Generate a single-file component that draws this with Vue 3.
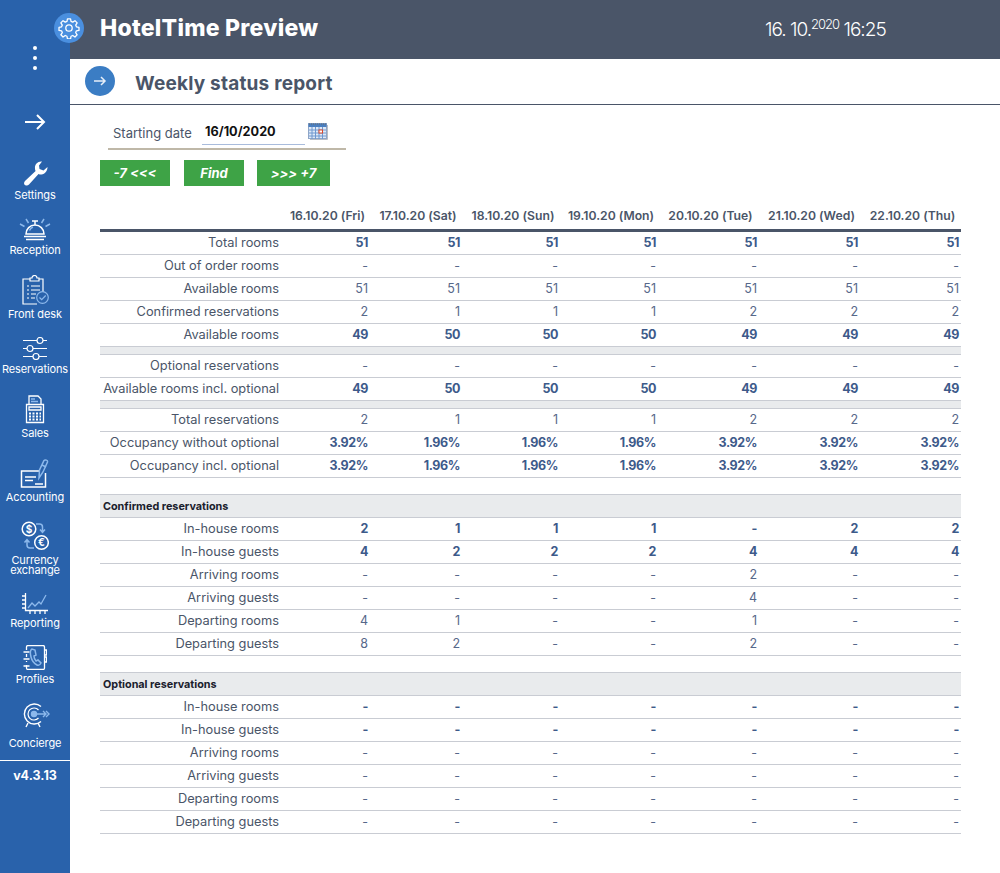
<script setup>
const dates = ['16.10.20 (Fri)','17.10.20 (Sat)','18.10.20 (Sun)','19.10.20 (Mon)','20.10.20 (Tue)','21.10.20 (Wed)','22.10.20 (Thu)']
const d = v => Array(7).fill(v)
const rows = [
  { l:'Total rooms', v:d('51'), b:1 },
  { l:'Out of order rooms', v:d('-') },
  { l:'Available rooms', v:d('51') },
  { l:'Confirmed reservations', v:['2','1','1','1','2','2','2'] },
  { l:'Available rooms', v:['49','50','50','50','49','49','49'], b:1 },
  { sep:1 },
  { l:'Optional reservations', v:d('-') },
  { l:'Available rooms incl. optional', v:['49','50','50','50','49','49','49'], b:1 },
  { sep:1 },
  { l:'Total reservations', v:['2','1','1','1','2','2','2'] },
  { l:'Occupancy without optional', v:['3.92%','1.96%','1.96%','1.96%','3.92%','3.92%','3.92%'], b:1 },
  { l:'Occupancy incl. optional', v:['3.92%','1.96%','1.96%','1.96%','3.92%','3.92%','3.92%'], b:1 },
  { gap:1 },
  { sec:'Confirmed reservations' },
  { l:'In-house rooms', v:['2','1','1','1','-','2','2'], b:1 },
  { l:'In-house guests', v:['4','2','2','2','4','4','4'], b:1 },
  { l:'Arriving rooms', v:['-','-','-','-','2','-','-'] },
  { l:'Arriving guests', v:['-','-','-','-','4','-','-'] },
  { l:'Departing rooms', v:['4','1','-','-','1','-','-'] },
  { l:'Departing guests', v:['8','2','-','-','2','-','-'] },
  { gap:1 },
  { sec:'Optional reservations' },
  { l:'In-house rooms', v:d('-'), b:1 },
  { l:'In-house guests', v:d('-'), b:1 },
  { l:'Arriving rooms', v:d('-') },
  { l:'Arriving guests', v:d('-') },
  { l:'Departing rooms', v:d('-') },
  { l:'Departing guests', v:d('-') },
]
const cols = [181, 89, 92, 98, 98, 101, 101, 101]
</script>

<template>
  <div class="page">
    <aside class="side">
      <div class="dots"><i></i><i></i><i></i></div>
      <svg class="arrow" width="22" height="18" viewBox="0 0 22 18" fill="none" stroke="#fff" stroke-width="2"><path d="M1 9h19M13 2l7 7-7 7"/></svg>

      <div class="item h38">
        <svg width="25" height="25" viewBox="0 0 25 25" fill="#fff"><path d="M19 .5C15 0 11.5 3 12 7.5c0 1 .3 2 .6 2.5L2 20c-1.500 1.500-1 3.500 0 4 1.500 1 3 .5 4-.5L15.500 13c1 .4 2 .6 3 .5 3.500-.5 6-3.500 6-7.500l-4 3.500-4-1.500-.5-3.500z"/></svg>
        <span>Settings</span>
      </div>
      <div class="item h55">
        <svg width="32" height="23" viewBox="0 0 32 23" fill="none" stroke="#fff" stroke-width="1.500"><path d="M7 16a9 9 0 0 1 18 0zM16 7V3.500M13 3h6M5 18.500h22M7 21.500h18"/><path stroke="#8db9ec" d="M10.500 12.500a6 6 0 0 1 3.500-3.500M1 6l4.500 2.500M31 6l-4.500 2.500M7 1l2.500 4M25 1l-2.500 4"/></svg>
        <span>Reception</span>
      </div>
      <div class="item h64">
        <svg width="28" height="30" viewBox="0 0 28 30" fill="none" stroke="#fff" stroke-width="1.200"><path d="M9 4H2v25h14M18 4h4v13M9 6V3h2a2.500 2.500 0 0 1 5 0h2v3zM6 11h2M10 11h9M6 15h2M10 15h9M6 19h2M10 19h5M6 23h2M10 23h4"/><circle cx="21.500" cy="22.500" r="5.800" stroke="#8db9ec"/><path stroke="#8db9ec" d="M18.500 22.500l2.200 2.200 4-4.200"/></svg>
        <span>Front desk</span>
      </div>
      <div class="item h55">
        <svg width="26" height="23" viewBox="0 0 26 23" fill="none" stroke="#fff" stroke-width="1.200"><path d="M1 3.500h14M21 3.500h4M1 11.500h4M11 11.500h14M1 19.500h10M17 19.500h8"/><circle cx="18" cy="3.500" r="3"/><circle cx="8" cy="11.500" r="3"/><circle cx="14" cy="19.500" r="3"/></svg>
        <span>Reservations</span>
      </div>
      <div class="item h64">
        <svg width="20" height="29" viewBox="0 0 20 29" fill="none" stroke="#fff" stroke-width="1.300"><path d="M4 9V1h9l3 3v5"/><path stroke="#8db9ec" d="M6 4h4M6 6.500h7"/><path d="M1.500 9.500h17v18h-17z"/><path d="M4 12h12v3H4z"/><path stroke-width="2" stroke-dasharray="2 1.500" d="M4 18.500h12M4 21.500h12M4 24.500h12"/></svg>
        <span>Sales</span>
      </div>
      <div class="item h64">
        <svg width="30" height="29" viewBox="0 0 30 29" fill="none" stroke="#fff" stroke-width="1.500"><path d="M20 12H1.500v16h24V14"/><path stroke-width="1.500" d="M5 18h11M5 21.500h8M15 25h8"/><path stroke="#8db9ec" d="M19 19l.5-8L24 1.500c1-1 4-.5 3.500 1.500L23 13z"/><path stroke="#8db9ec" d="M22 6l4 2"/></svg>
        <span>Accounting</span>
      </div>
      <div class="item h73">
        <svg width="28" height="30" viewBox="0 0 28 30" fill="none" stroke="#fff" stroke-width="1.500"><circle cx="8" cy="8" r="6.800"/><circle cx="20.500" cy="21.500" r="6.800"/><path stroke="#8db9ec" d="M15 3h3.500a3 3 0 0 1 3 3v5M19 8.500l2.500 2.800 2.500-2.800M13 27H9a3 3 0 0 1-3-3v-5M3.500 21.500L6 18.700l2.500 2.800"/><text x="8" y="11.500" text-anchor="middle" class="cur">$</text><text x="20.500" y="25" text-anchor="middle" class="cur">€</text></svg>
        <span>Currency<br>exchange</span>
      </div>
      <div class="item h53">
        <svg width="26" height="21" viewBox="0 0 26 21" fill="none" stroke="#fff" stroke-width="1.300"><path d="M3.500 0v17.500H26"/><path d="M0 3h3.500M0 7h3.500M0 11h3.500M0 15h3.500M8 17.500V21M13 17.500V21M18 17.500V21M23 17.500V21"/><path stroke="#8db9ec" d="M6 15l4-5 3 3 4-4 2 2 5-9"/></svg>
        <span>Reporting</span>
      </div>
      <div class="item h56">
        <svg width="24" height="25" viewBox="0 0 24 25" fill="none" stroke="#fff" stroke-width="1.300"><path d="M3.500 5V2a1.500 1.500 0 0 1 1.500-1.500h15A1.500 1.500 0 0 1 21.500 2v21a1.500 1.500 0 0 1-1.500 1.500H5A1.500 1.500 0 0 1 3.500 23v-3M3.500 9v3M3.500 16v1M.5 7h6M.5 14h6M.5 21h6M21.500 5h2v5h-2M21.500 12h2v5h-2"/><path stroke="#8db9ec" stroke-width="1.500" d="M9 4c-2 1-2 4-1 8s4 7 6 8 3 0 4-2l-3-3-2 1c-1-1-2-3-2-5l2-1-1-5z"/></svg>
        <span>Profiles</span>
      </div>
      <div class="item h64 conc">
        <svg width="29" height="26" viewBox="0 0 29 26" fill="none" stroke="#fff" stroke-width="1.400"><path d="M20 3.500a10 10 0 1 0 0 15"/><path stroke-width="1.200" d="M17.500 7a6 6 0 1 0 0 8"/><circle cx="13" cy="11" r="2.500" fill="#8db9ec" stroke="#8db9ec"/><path stroke="#8db9ec" d="M13 11h11M22 8l3 3-3 3M25 8l3 3-3 3"/><path d="M7 20l-2 4M17 20l2 4"/></svg>
        <span>Concierge</span>
      </div>
      <div class="version">v4.3.13</div>
    </aside>

    <div class="gear">
      <svg width="22" height="22" viewBox="0 0 24 24" fill="none" stroke="#fff" stroke-width="1.400"><circle cx="12" cy="12" r="3.500"/><path d="M10.300 2h3.400l.5 2.800 1.900.8 2.400-1.600 2.400 2.400-1.600 2.400.8 1.900 2.800.5v3.400l-2.800.5-.8 1.900 1.600 2.400-2.400 2.400-2.400-1.600-1.900.8-.5 2.800h-3.400l-.5-2.800-1.900-.8-2.400 1.600-2.400-2.400 1.600-2.400-.8-1.900-2.800-.5v-3.400l2.800-.5.8-1.900-1.600-2.400 2.400-2.400 2.400 1.600 1.900-.8z" stroke-linejoin="round"/></svg>
    </div>

    <div class="main">
      <header class="top">
        <h1>HotelTime Preview</h1>
        <div class="clock">16. 10.<sup>2020</sup> 16:25</div>
      </header>

      <div class="title">
        <div class="circle">
          <svg width="14" height="12" viewBox="0 0 14 12" fill="none" stroke="#e6eef8" stroke-width="1.500"><path d="M1 6h11M8 2l4 4-4 4"/></svg>
        </div>
        <h2>Weekly status report</h2>
      </div>

      <div class="content">
        <div class="filter">
          <label>Starting date</label>
          <div class="input">16/10/2020</div>
          <svg width="20" height="17" viewBox="0 0 20 17" class="cal">
            <rect x="0.500" y="0.500" width="18" height="15" fill="#dfe9f7" stroke="#8fa6c8"/>
            <rect x="0.500" y="0.500" width="18" height="3.500" fill="#4a7fc0"/>
            <path d="M1 1h18" stroke="#6b6b6b" stroke-dasharray="1 1"/>
            <path d="M1 7h17M1 10h17M1 13h17M4 4v12M7.500 4v12M11 4v12M14.500 4v12" stroke="#6f98cf" stroke-width="1"/>
            <rect x="11" y="7" width="3.500" height="3" fill="#fff" stroke="#d9482b"/>
            <path d="M19.500 2v14.500H2" stroke="#b9bdc4" fill="none"/>
          </svg>
        </div>
        <div class="buttons">
          <button class="b1">-7 &lt;&lt;&lt;</button>
          <button class="b2">Find</button>
          <button class="b3">&gt;&gt;&gt; +7</button>
        </div>

        <table class="report">
          <colgroup><col v-for="(w, i) in cols" :key="i" :width="w"></colgroup>
          <thead>
            <tr>
              <th></th>
              <th v-for="x in dates" :key="x">{{ x }}</th>
            </tr>
          </thead>
          <tbody>
            <template v-for="(r, i) in rows" :key="i">
              <tr v-if="r.sep" class="sep"><td colspan="8"></td></tr>
              <tr v-else-if="r.gap" class="gap"><td colspan="8"></td></tr>
              <tr v-else-if="r.sec" class="sec"><td colspan="8">{{ r.sec }}</td></tr>
              <tr v-else :class="{ bold: r.b }">
                <td class="lab">{{ r.l }}</td>
                <td v-for="(x, j) in r.v" :key="j" class="val">{{ x }}</td>
              </tr>
            </template>
          </tbody>
        </table>
      </div>
    </div>
  </div>
</template>

<style>
html, body { margin: 0; background: #fff; }
</style>

<style scoped>
.page {
  position: relative;
  display: flex;
  width: 1000px;
  height: 873px;
  overflow: hidden;
  font-family: Inter, "Open Sans", sans-serif;
  color: #4a5568;
}
.side {
  width: 70px;
  flex: none;
  background: #2962ab;
  color: #fff;
  display: flex;
  flex-direction: column;
  align-items: stretch;
  box-sizing: border-box;
  padding-top: 46px;
}
.dots { display: flex; flex-direction: column; align-items: center; gap: 6px; height: 67px; }
.dots i { width: 4px; height: 4px; border-radius: 50%; background: #fff; }
.arrow { align-self: center; height: 18px; flex: none; }
.item {
  display: flex;
  flex-direction: column;
  align-items: center;
  justify-content: flex-end;
  flex: none;
  gap: 4px;
}
.item svg { flex: none; display: block; }
.item span { font-size: 11px; line-height: 10px; text-align: center; white-space: nowrap; letter-spacing: -0.1px; }
.h38 { height: 69px; }
.h53 { height: 53px; }
.h55 { height: 55px; }
.h56 { height: 56px; }
.h64 { height: 64px; }
.h73 { height: 73px; }
.conc svg { margin-bottom: 5px; }
.cur { font-size: 10px; font-weight: 700; fill: #fff; stroke: none; font-family: Inter, sans-serif; }
.version {
  margin-top: 12px;
  border-top: 1px solid #fff;
  padding-top: 7px;
  text-align: center;
  font-size: 12.500px;
  font-weight: 700;
}
.gear {
  position: absolute;
  left: 54px;
  top: 13px;
  width: 30px;
  height: 30px;
  border-radius: 50%;
  background: #4a8fdf;
  display: flex;
  align-items: center;
  justify-content: center;
}
.main { flex: 1; min-width: 0; }
.top {
  height: 59px;
  background: #4a5568;
  color: #fff;
  display: flex;
  align-items: center;
  box-sizing: border-box;
  padding-left: 30px;
  padding-bottom: 3px;
}
.top h1 { margin: 0; font-size: 23px; font-weight: 800; letter-spacing: 0.25px; width: 665px; flex: none; white-space: nowrap; }
.clock { font-size: 19px; font-weight: 300; letter-spacing: -1px; margin-top: 3px; }
.clock sup { font-size: 13px; line-height: 0; }
.title {
  height: 46px;
  box-sizing: border-box;
  border-bottom: 1px solid #4a5568;
  display: flex;
  align-items: center;
  padding-left: 15px;
  gap: 20px;
}
.title h2 { margin: 3px 0 0; font-size: 19px; font-weight: 700; letter-spacing: 0.2px; }
.circle {
  width: 30px;
  height: 30px;
  border-radius: 50%;
  background: #3b7dc4;
  display: flex;
  align-items: center;
  justify-content: center;
  margin-bottom: 1px;
}
.content { padding: 0 39px 0 30px; }
.filter {
  margin-left: 8px;
  width: 238px;
  height: 45px;
  box-sizing: border-box;
  border-bottom: 2px solid #bfb8a8;
  display: flex;
  align-items: center;
  padding: 12px 0 0 5px;
}
.filter label { font-size: 13px; width: 89px; flex: none; }
.input {
  width: 103px;
  box-sizing: border-box;
  height: 25px;
  line-height: 24px;
  padding-left: 3px;
  border-bottom: 1px solid #a9bcdc;
  font-size: 12.700px;
  font-weight: 700;
  color: #111;
  flex: none;
}
.cal { margin: -2px 0 0 3px; flex: none; }
.buttons { display: flex; margin-top: 10px; }
.buttons button {
  height: 26px;
  border: 0;
  background: #3ea346;
  color: #fff;
  font: italic 700 13px Inter, sans-serif;
  padding: 0;
}
.b1 { width: 70px; margin-right: 14px; }
.b2 { width: 60px; margin-right: 13px; }
.b3 { width: 73px; }
.report {
  width: 861px;
  margin-top: 19px;
  table-layout: fixed;
  border-collapse: separate;
  border-spacing: 0;
  font-size: 12.800px;
}
th {
  box-sizing: border-box;
  padding: 0 0 4px 4px;
  border-bottom: 3px solid #4a5568;
  height: 27px;
  font-size: 12.200px;
  font-weight: 600;
  text-align: center;
  white-space: nowrap;
}
td {
  height: 23px;
  box-sizing: border-box;
  padding: 0 0 1px;
  border-bottom: 1px solid #c9ccd3;
}
.lab { text-align: right; padding-right: 2px; white-space: nowrap; }
.val { text-align: right; padding-right: 2px; color: #56688a; font-size: 12.500px; }
.bold .val { font-weight: 700; color: #3d5a8a; letter-spacing: -0.4px; }
.sep td { height: 8px; padding: 0; background: #e9ebed; }
.gap td { height: 16px; padding: 0; border-bottom: 0; }
.sec td {
  height: 24px;
  padding: 0 0 0 3px;
  background: #e9ebed;
  border-top: 1px solid #c9ccd3;
  font-size: 10.800px;
  font-weight: 700;
  color: #1a202c;
}
</style>
